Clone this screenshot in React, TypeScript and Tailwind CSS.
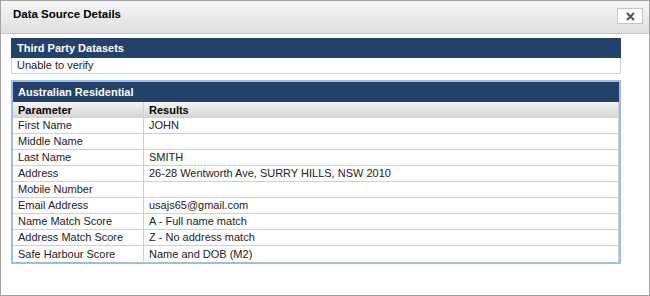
const rows: [string, string][] = [
  ['First Name', 'JOHN'],
  ['Middle Name', ''],
  ['Last Name', 'SMITH'],
  ['Address', '26-28 Wentworth Ave, SURRY HILLS, NSW 2010'],
  ['Mobile Number', ''],
  ['Email Address', 'usajs65@gmail.com'],
  ['Name Match Score', 'A - Full name match'],
  ['Address Match Score', 'Z - No address match'],
  ['Safe Harbour Score', 'Name and DOB (M2)'],
]

export default function App() {
  return (
    <div className="w-[650px] h-[296px] bg-white border border-[#a3a3a3] font-['Liberation_Sans',Arial,sans-serif] text-[11px] text-[#222] overflow-hidden">
      {/* window title */}
      <div className="h-[33px] flex items-start justify-between pl-[12px] pr-[6px] pt-[6px] border-b border-[#c8c8c8] bg-gradient-to-b from-[#f7f7f7] to-[#dedede]">
        <span className="font-bold text-[11.5px] text-black leading-[14px]">Data Source Details</span>
        <button className="mt-[1px] w-[26px] h-[16px] flex items-center justify-center bg-white border border-[#c4c4c4]">
          <svg width="9" height="9" viewBox="0 0 9 9">
            <path d="M1 1L8 8M8 1L1 8" stroke="#555" strokeWidth="2" />
          </svg>
        </button>
      </div>

      <div className="pl-[10px] pt-[4px]">
        {/* Third party */}
        <div className="w-[610px]">
          <div className="h-[20px] bg-[#23426a] text-white font-bold flex items-center px-[6px]">Third Party Datasets</div>
          <div className="h-[16px] border border-t-0 border-[#cfcfcf] flex items-center px-[5px] leading-none">Unable to verify</div>
        </div>

        {/* Australian Residential */}
        <div className="w-[610px] mt-[6px] border-2 border-[#99bde8]">
          <div className="h-[20px] bg-[#23426a] text-white font-bold flex items-center px-[5px]">Australian Residential</div>
          <div className="grid grid-cols-[131px_1fr] border-r border-[#cfcfcf]">
            <div className="h-[16px] flex items-center px-[5px] font-bold text-black bg-gradient-to-b from-[#f5f5f5] to-[#d2d4d0] border-r border-[#cfcfcf]">Parameter</div>
            <div className="h-[16px] flex items-center px-[5px] font-bold text-black bg-gradient-to-b from-[#f5f5f5] to-[#d2d4d0]">Results</div>
            {rows.map(([k, v], i) => (
              <div key={k} className="contents">
                <div className={`h-[16px] flex items-center px-[5px] border-r border-[#cfcfcf] ${i < rows.length - 1 ? 'border-b' : ''}`}>{k}</div>
                <div className={`h-[16px] flex items-center px-[5px] border-[#cfcfcf] ${i < rows.length - 1 ? 'border-b' : ''}`}>{v}</div>
              </div>
            ))}
          </div>
        </div>
      </div>
    </div>
  )
}
